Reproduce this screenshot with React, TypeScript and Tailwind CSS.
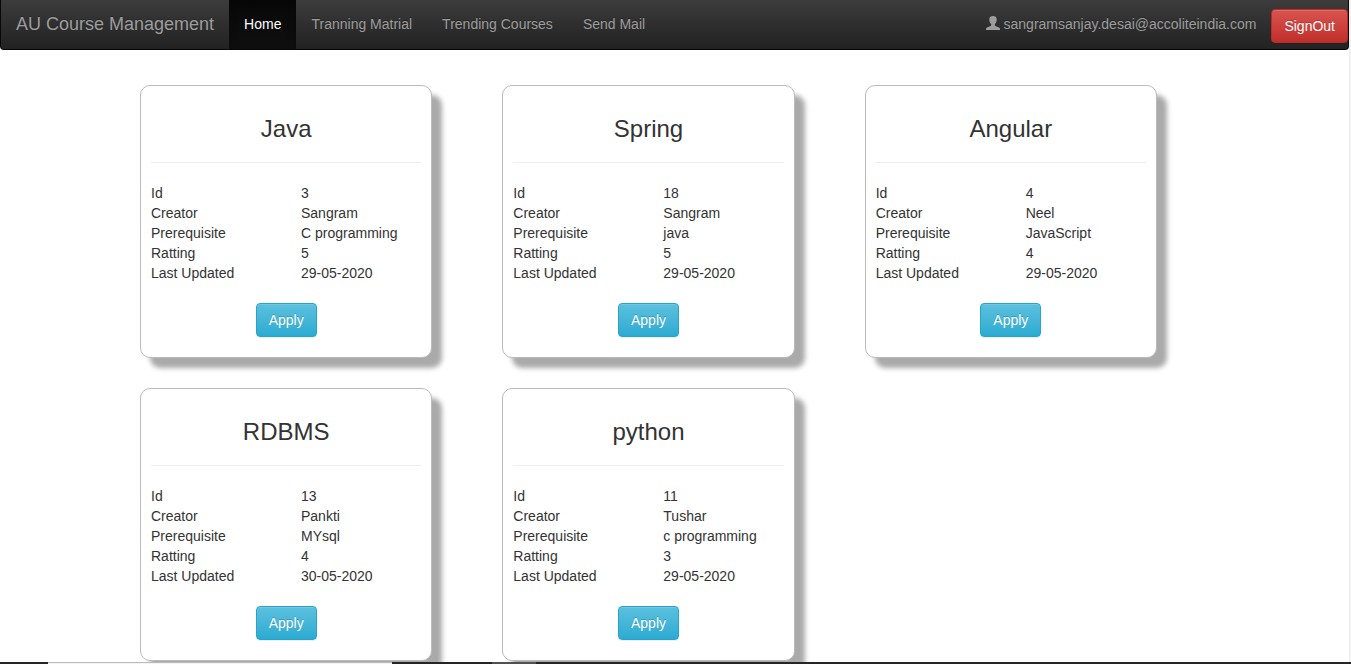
type Course = {
  name: string;
  id: number;
  creator: string;
  prerequisite: string;
  rating: number;
  updated: string;
};

const courses: Course[] = [
  { name: "Java", id: 3, creator: "Sangram", prerequisite: "C programming", rating: 5, updated: "29-05-2020" },
  { name: "Spring", id: 18, creator: "Sangram", prerequisite: "java", rating: 5, updated: "29-05-2020" },
  { name: "Angular", id: 4, creator: "Neel", prerequisite: "JavaScript", rating: 4, updated: "29-05-2020" },
  { name: "RDBMS", id: 13, creator: "Pankti", prerequisite: "MYsql", rating: 4, updated: "30-05-2020" },
  { name: "python", id: 11, creator: "Tushar", prerequisite: "c programming", rating: 3, updated: "29-05-2020" },
];

const links = ["Home", "Tranning Matrial", "Trending Courses", "Send Mail"];

function UserIcon() {
  return (
    <svg width="14" height="14" viewBox="0 0 14 14" className="mb-[2px]" fill="currentColor" aria-hidden="true">
      <path d="M7 0C4.700 0 3.300 1.200 3.300 3.400c0 1.900.7 3.700 1.900 4.700v1c0 .5-.2.8-.7 1L1 11.500c-.6.3-1 .8-1 1.400V14h14v-1.100c0-.6-.4-1.100-1-1.400l-3.500-1.400c-.5-.2-.7-.5-.7-1v-1c1.200-1 1.900-2.800 1.900-4.700C10.700 1.200 9.300 0 7 0Z" />
    </svg>
  );
}

function NavBar() {
  return (
    <nav className="flex h-[50px] items-start rounded-b border border-t-0 border-[#080808] bg-linear-to-b from-[#3c3c3c] to-[#222] text-[#9d9d9d] [text-shadow:0_-1px_0_rgba(0,0,0,0.25)]">
      <a href="#home" className="px-[15px] py-[14px] text-[18px] leading-5">
        AU Course Management
      </a>
      <ul className="flex">
        {links.map((label, i) => (
          <li key={label}>
            <a
              href={"#" + label.replace(" ", "-").toLowerCase()}
              className={
                i === 0
                  ? "block bg-linear-to-b from-[#080808] to-[#0f0f0f] px-[15px] pt-[14px] pb-[15px] text-white shadow-[inset_0_3px_9px_rgba(0,0,0,0.25)]"
                  : "block px-[15px] pt-[14px] pb-[15px]"
              }
            >
              {label}
            </a>
          </li>
        ))}
      </ul>
      <div className="ml-auto flex items-start">
        <a href="#profile" className="flex items-center gap-1 px-[15px] py-[14px]">
          <UserIcon />
          sangramsanjay.desai@accoliteindia.com
        </a>
        <button
          type="button"
          className="mt-[9px] rounded border border-[#b92c28] bg-linear-to-b from-[#d9534f] to-[#c12e2a] px-3 py-[6px] text-white shadow-[inset_0_1px_0_rgba(255,255,255,0.15),0_1px_1px_rgba(0,0,0,0.075)] [text-shadow:0_-1px_0_rgba(0,0,0,0.2)]"
        >
          SignOut
        </button>
      </div>
    </nav>
  );
}

function CourseCard({ course }: { course: Course }) {
  const rows: [string, string | number][] = [
    ["Id", course.id],
    ["Creator", course.creator],
    ["Prerequisite", course.prerequisite],
    ["Ratting", course.rating],
    ["Last Updated", course.updated],
  ];
  return (
    <article className="rounded-[10px] border border-[#bbb] bg-white px-[10px] pt-[30px] pb-5 shadow-[10px_10px_5px_#aaa]">
      <h3 className="text-center text-2xl leading-[26px]">{course.name}</h3>
      <hr className="my-5 border-[#eee]" />
      <dl className="grid grid-cols-[150px_1fr]">
        {rows.map(([label, value]) => (
          <div key={label} className="contents">
            <dt>{label}</dt>
            <dd>{value}</dd>
          </div>
        ))}
      </dl>
      <div className="mt-5 flex justify-center">
        <button
          type="button"
          className="rounded border border-[#28a4c9] bg-linear-to-b from-[#5bc0de] to-[#2aabd2] px-3 py-[6px] text-white shadow-[inset_0_1px_0_rgba(255,255,255,0.15),0_1px_1px_rgba(0,0,0,0.075)] [text-shadow:0_-1px_0_rgba(0,0,0,0.2)]"
        >
          Apply
        </button>
      </div>
    </article>
  );
}

export default function App() {
  return (
    <div className="flex h-screen flex-col bg-white font-['Liberation_Sans',Arial,sans-serif] text-sm leading-5 text-[#333]">
      <div className="flex min-h-0 flex-1">
        <div className="flex-1 overflow-y-auto [scrollbar-width:none]">
          <NavBar />
          <main className="grid grid-cols-3 gap-x-[70px] gap-y-[30px] pt-[35px] pr-48 pb-[30px] pl-[140px]">
            {courses.map((course) => (
              <CourseCard key={course.id} course={course} />
            ))}
          </main>
        </div>
        <div className="w-[2px] bg-[#f1f1f1]" />
      </div>
      <div className="flex h-[2px] bg-[#252525]">
        <div className="ml-12 w-[344px] border-t border-[#bbb] bg-[#f3f3f3]" />
        <div className="ml-[100px] w-11 bg-[#505050]" />
      </div>
    </div>
  );
}
